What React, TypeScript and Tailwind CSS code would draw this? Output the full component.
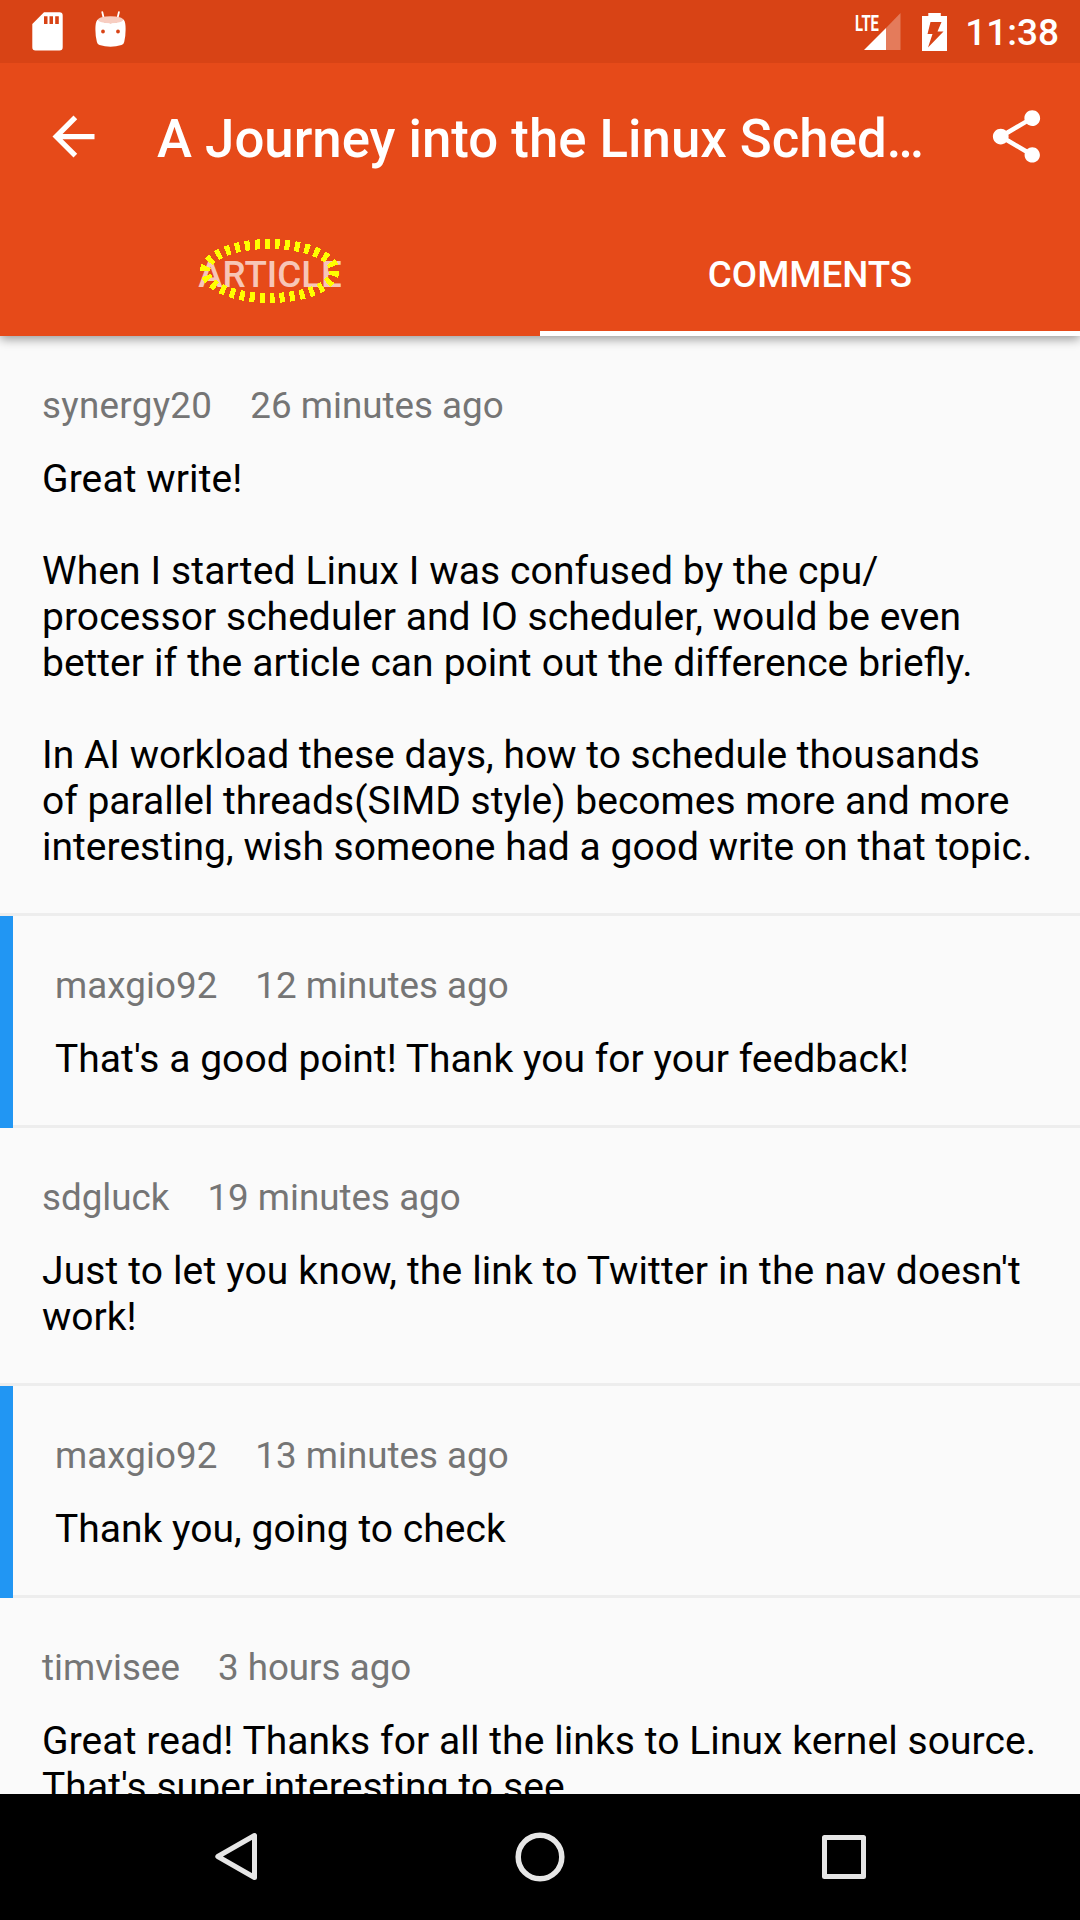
import React from 'react';

type Line = [text: string, tracking?: string];
type Comment = { author: string; time: string; lines: Line[]; reply?: boolean; authorTracking?: string };

const comments: Comment[] = [
  {
    author: 'synergy20', authorTracking: 'tracking-[0.3px]', time: '26 minutes ago', lines: [
      ['Great write!', 'tracking-[0.1px]'], [''],
      ['When I started Linux I was confused by the cpu/', 'tracking-[0.12px]'],
      ['processor scheduler and IO scheduler, would be even', 'tracking-[0.05px]'],
      ['better if the article can point out the difference briefly.', '[word-spacing:0.4px]'], [''],
      ['In AI workload these days, how to schedule thousands', 'tracking-[0.02px]'],
      ['of parallel threads(SIMD style) becomes more and more'],
      ['interesting, wish someone had a good write on that topic.', 'tracking-[0.02px]'],
    ],
  },
  { author: 'maxgio92', authorTracking: 'tracking-[0.05px]', time: '12 minutes ago', lines: [["That's a good point! Thank you for your feedback!", 'tracking-[0.05px]']], reply: true },
  { author: 'sdgluck', time: '19 minutes ago', lines: [["Just to let you know, the link to Twitter in the nav doesn't", 'tracking-[0.14px]'], ['work!']] },
  { author: 'maxgio92', authorTracking: 'tracking-[0.05px]', time: '13 minutes ago', lines: [['Thank you, going to check', 'tracking-[0.03px]']], reply: true },
  { author: 'timvisee', time: '3 hours ago', lines: [['Great read! Thanks for all the links to Linux kernel source.', 'tracking-[0.08px]'], ["That's super interesting to see.", 'tracking-[0.08px]']] },
];

function CommentRow({ c }: { c: Comment }) {
  return (
    <div className="flex shrink-0 border-b-3 border-[#ededed]">
      {c.reply && <div className="-mb-[3px] w-[13px] shrink-0 bg-[#2196f3]" />}
      <div className="pt-[45px] pb-[43px] pl-[42px] whitespace-nowrap">
        <div className="flex gap-[38px] text-[36.75px] leading-[49px] text-[#757575]">
          <span className={c.authorTracking}>{c.author}</span>
          <span>{c.time}</span>
        </div>
        <div className="mt-[26px] text-[39px] leading-[46px] text-black">
          {c.lines.map(([text, tracking], i) => (
            <div key={i} className="h-[46px]"><span className={tracking}>{text}</span></div>
          ))}
        </div>
      </div>
    </div>
  );
}

function StatusBar() {
  return (
    <div className="relative z-20 flex h-[63px] shrink-0 items-center bg-[#d84315] pr-[21px] pl-[32px] text-white">
      <svg className="h-[39px] w-[31px]" viewBox="0 0 31 39">
        <path fill="currentColor" fillRule="evenodd" d="M12 0.3H27.5Q30.7 0.3 30.7 3.5V35.2Q30.7 38.4 27.5 38.4H3.5Q0.3 38.4 0.3 35.2V12ZM12 4.3V12H15.5V4.3ZM17.5 4.3V12H21V4.3ZM23.2 4.3V12H26.8V4.3Z" />
      </svg>
      <svg className="mb-[5px] ml-[32px] h-[37px] w-[31px]" viewBox="0 0 31 37">
        <path stroke="currentColor" strokeWidth="1.8" strokeLinecap="round" d="M7.3 1.2L8.9 8M23.9 1.2L22.3 8" />
        <path fill="currentColor" fillRule="evenodd" d="M3.3 8.3Q15.5 16 28 8.3Q30.2 9.5 30.5 15Q31 24 29.2 31Q28.7 33.3 26.5 34Q15.5 37.5 4.5 34Q2.5 33.3 1.9 31Q0 24 0.5 15Q0.9 9.5 3.3 8.3ZM8 18.6a1.9 1.9 0 1 0 0 3.8a1.9 1.9 0 1 0 0-3.8ZM23 18.6a1.9 1.9 0 1 0 0 3.8a1.9 1.9 0 1 0 0-3.8Z" />
        <ellipse cx="15.6" cy="8.7" rx="12.6" ry="3.5" fill="#f7cdc1" />
      </svg>
      <div className="grow" />
      <div className="relative mr-[21px] h-[38px] w-[46px]">
        <span className="absolute top-0 left-0 origin-left scale-x-[0.66] text-[22.5px] leading-[20px] font-bold">LTE</span>
        <svg className="h-full w-full" viewBox="0 0 46 38">
          <path fill="#fff" fillOpacity="0.3" d="M31 15L45.5 0V37H31Z" />
          <path fill="#fff" d="M9 37L31 15V37Z" />
        </svg>
      </div>
      <svg className="mr-[18px] h-[38px] w-[25px]" viewBox="0 0 25 38">
        <path fill="currentColor" fillRule="evenodd" d="M6.3 0H18.8V3H25V38H0V3H6.3ZM8.5 9L5.5 21H10.5L6 34.5L21.5 18.5H15.5L19.5 9Z" />
      </svg>
      <span className="mt-[2px] text-[37px] leading-[44px] font-medium">11:38</span>
    </div>
  );
}

function AppBar() {
  return (
    <div className="relative z-10 flex h-[273px] shrink-0 flex-col bg-[#e64a19] text-white shadow-[0_3px_10px_rgba(0,0,0,0.4)]">
      <div className="flex h-[147px] shrink-0 items-center pr-[32px] pl-[42px]">
        <svg className="h-[63px] w-[63px] shrink-0" viewBox="0 0 24 24" fill="currentColor">
          <path d="M20 11H7.83l5.59-5.59L12 4l-8 8 8 8 1.41-1.41L7.83 13H20v-2z" />
        </svg>
        <span className="mt-[4px] ml-[52px] grow text-[52.75px] leading-[62px] font-medium whitespace-nowrap">A Journey into the Linux Sched…</span>
        <svg className="h-[63px] w-[63px] shrink-0" viewBox="0 0 24 24" fill="currentColor">
          <path d="M18 16.08c-.76 0-1.44.3-1.96.77L8.91 12.7c.05-.23.09-.46.09-.7s-.04-.47-.09-.7l7.05-4.11c.54.5 1.25.81 2.04.81 1.66 0 3-1.34 3-3s-1.34-3-3-3-3 1.34-3 3c0 .24.04.47.09.7L8.04 9.81C7.5 9.31 6.79 9 6 9c-1.66 0-3 1.34-3 3s1.34 3 3 3c.79 0 1.5-.31 2.04-.81l7.12 4.16c-.05.21-.08.43-.08.65 0 1.61 1.31 2.92 2.92 2.92s2.92-1.31 2.92-2.92-1.31-2.92-2.92-2.92z" />
        </svg>
      </div>
      <div className="grid h-[126px] grid-cols-2 text-center text-[36.75px] leading-[43px] font-medium">
        <div className="relative flex items-center justify-center pt-[2px]">
          <span className="text-white/70">ARTICLE</span>
          <svg className="absolute top-[28px] left-[199px] h-[66px] w-[142px]" viewBox="0 0 142 66" shapeRendering="crispEdges">
            <ellipse cx="70.7" cy="33" rx="64.7" ry="27" fill="none" stroke="#ffff00" strokeWidth="10" strokeDasharray="5 5" />
          </svg>
        </div>
        <div className="flex items-center justify-center border-b-5 border-white pt-[7px]">COMMENTS</div>
      </div>
    </div>
  );
}

function NavigationBar() {
  return (
    <div className="flex h-[126px] shrink-0 items-center justify-between bg-black px-[206px]">
      <svg className="h-[60px] w-[60px]" viewBox="0 0 60 60" fill="none" stroke="#e6e6e6" strokeWidth="5" strokeLinejoin="round">
        <path d="M48.5 8.5V50.5L11.8 29.5Z" />
      </svg>
      <svg className="h-[60px] w-[60px]" viewBox="0 0 60 60" fill="none" stroke="#e6e6e6" strokeWidth="5.5">
        <circle cx="30" cy="30" r="21.8" />
      </svg>
      <svg className="h-[60px] w-[60px]" viewBox="0 0 60 60" fill="none" stroke="#e6e6e6" strokeWidth="5" strokeLinejoin="round">
        <rect x="10.5" y="10.5" width="39" height="39" />
      </svg>
    </div>
  );
}

export default function App() {
  return (
    <div className="flex h-[1920px] w-[1080px] flex-col overflow-hidden bg-[#fafafa] font-['Roboto',sans-serif]">
      <StatusBar />
      <AppBar />
      <div className="flex min-h-0 grow flex-col overflow-hidden">
        {comments.map((c, i) => <CommentRow key={i} c={c} />)}
      </div>
      <NavigationBar />
    </div>
  );
}
